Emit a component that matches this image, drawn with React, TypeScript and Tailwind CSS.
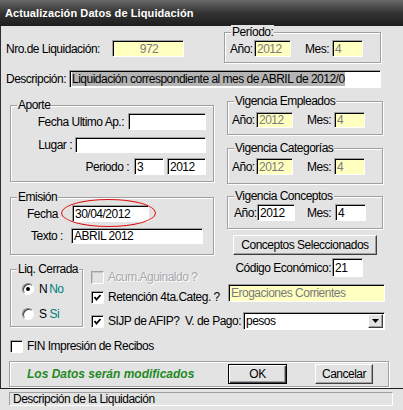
import type { ReactNode } from 'react';

const sunk = "border border-t-[#a0a0a0] border-l-[#a0a0a0] border-b-white border-r-white shadow-[inset_1px_1px_0_#000]";
const yellowBox = `${sunk} bg-[#ffffc0] text-[#7a7a7a] flex items-center pl-[2px] leading-[14px] overflow-hidden`;
const whiteBox = `${sunk} bg-white text-black flex items-center pl-[2px] leading-[14px] overflow-hidden`;
const raised = "bg-[#e3e3e3] border border-t-white border-l-white border-b-[#404040] border-r-[#404040] shadow-[inset_-1px_-1px_0_#a0a0a0] flex items-center justify-center";

function Group({ label, className = '', children }: { label: string; className?: string; children?: ReactNode }) {
  return (
    <div className={`relative border border-[#a0a0a0] shadow-[inset_1px_1px_0_#fff,1px_1px_0_#fff] ${className}`}>
      <span className="absolute left-[6px] -top-[8px] px-[1px] bg-[#e3e3e3] leading-[14px]">{label}</span>
      {children}
    </div>
  );
}

function Check({ checked = false, disabled = false }: { checked?: boolean; disabled?: boolean }) {
  return (
    <div className={`w-[13px] h-[13px] shrink-0 ${disabled ? 'border border-t-[#a0a0a0] border-l-[#a0a0a0] border-b-white border-r-white shadow-[inset_1px_1px_0_#c8c8c8] bg-[#e3e3e3]' : `${sunk} bg-white`}`}>
      {checked && (
        <svg viewBox="0 0 11 11" className="w-full h-full">
          <polyline points="2.5,5 4.5,7.5 8.5,3" fill="none" stroke="#000" strokeWidth="1.8" />
        </svg>
      )}
    </div>
  );
}

function Radio({ on = false }: { on?: boolean }) {
  return (
    <div className="w-[12px] h-[12px] rounded-full bg-white border border-t-[#808080] border-l-[#808080] border-b-white border-r-white shadow-[inset_1px_1px_0_#404040] flex items-center justify-center">
      {on && <div className="w-[4px] h-[4px] rounded-full bg-black" />}
    </div>
  );
}

function YearMonth({ year, month, white = false, h = 'h-[16px]' }: { year: string; month: string; white?: boolean; h?: string }) {
  const box = white ? whiteBox : yellowBox;
  return (
    <div className="flex items-center">
      <span className="w-[24px]">Año:</span>
      <div className={`${box} w-[37px] ${h}`}>{year}</div>
      <span className="ml-[14px] w-[27px]">Mes:</span>
      <div className={`${box} w-[31px] ${h}`}>{month}</div>
    </div>
  );
}

export default function App() {
  return (
    <div className="w-[403px] h-[410px] overflow-hidden bg-[#e3e3e3] text-black text-[12px] tracking-[-0.5px] leading-[14px] whitespace-nowrap font-['Liberation_Sans',sans-serif]">
      <div className="h-[26px] bg-gradient-to-b from-[#6a6a6a] via-[#333333] to-[#1e1e1e] flex items-center pl-[5px] text-white font-bold text-[11px] tracking-[0.1px]">
        Actualización Datos de Liquidación
      </div>

      <div className="h-[363px] border-l border-l-[#2e2e2e] border-b border-b-[#1e1e1e]">
        {/* fila 1 */}
        <div className="flex items-start">
          <div className="pl-[5px] pt-[14px] flex items-center">
            <span className="w-[106px]">Nro.de Liquidación:</span>
            <div className={`${yellowBox} w-[72px] h-[17px] justify-center pl-0`}>972</div>
          </div>
          <Group label="Período:" className="ml-[40px] mt-[6px] w-[157px] h-[31px]">
            <div className="pl-[5px] pt-[7px]">
              <YearMonth year="2012" month="4" h="h-[17px]" />
            </div>
          </Group>
        </div>

        <div className="mt-[7px] pl-[5px] flex items-center">
          <span className="w-[63px]">Descripción:</span>
          <div className={`${whiteBox} w-[312px] h-[18px]`}>
            <span className="bg-[#b4b4b4]">Liquidación correspondiente al mes de ABRIL de 2012/0</span>
          </div>
        </div>

        {/* columnas */}
        <div className="flex items-start pl-[9px]">
          <div className="mt-[17px] w-[204px] flex flex-col">
            <Group label="Aporte" className="h-[77px] flex flex-col items-end pr-[7px] pt-[7px]">
              <div className="flex items-center">
                <span className="mr-[4px]">Fecha Ultimo Ap.:</span>
                <div className={`${whiteBox} w-[78px] h-[17px]`} />
              </div>
              <div className="flex items-center mt-[7px]">
                <span className="mr-[3px]">Lugar :</span>
                <div className={`${whiteBox} w-[131px] h-[16px]`} />
              </div>
              <div className="flex items-center mt-[5px]">
                <span className="mr-[5px]">Periodo :</span>
                <div className={`${whiteBox} w-[30px] h-[17px]`}>3</div>
                <div className={`${whiteBox} w-[39px] h-[17px] ml-[3px]`}>2012</div>
              </div>
            </Group>

            <Group label="Emisión" className="mt-[15px] h-[58px] pt-[7px]">
              <div className="flex items-center">
                <span className="pl-[16px] w-[61px]">Fecha</span>
                <div className={`${whiteBox} w-[77px] h-[17px] relative overflow-visible`}>
                  30/04/2012
                  <span className="absolute -left-[12px] -top-[7px] w-[95px] h-[28px] rounded-[50%] border border-[#e01010]" />
                </div>
              </div>
              <div className="flex items-center mt-[6px]">
                <span className="pl-[20px] w-[60px]">Texto :</span>
                <div className={`${whiteBox} w-[132px] h-[16px]`}>ABRIL 2012</div>
              </div>
            </Group>
          </div>

          <div className="ml-[13px] mt-[13px] w-[156px] flex flex-col">
            <Group label="Vigencia Empleados" className="h-[34px] pt-[10px] pl-[4px]">
              <YearMonth year="2012" month="4" />
            </Group>
            <Group label="Vigencia Categorías" className="mt-[13px] h-[36px] pt-[9px] pl-[4px]">
              <YearMonth year="2012" month="4" h="h-[17px]" />
            </Group>
            <Group label="Vigencia Conceptos" className="mt-[12px] h-[33px] pt-[7px] pl-[6px]">
              <div className="flex items-center">
                <span className="w-[23px]">Año:</span>
                <div className={`${whiteBox} w-[38px] h-[17px]`}>2012</div>
                <span className="ml-[12px] w-[28px]">Mes:</span>
                <div className={`${whiteBox} w-[31px] h-[17px]`}>4</div>
              </div>
            </Group>
            <div className={`${raised} mt-[6px] ml-[6px] w-[144px] h-[20px]`}>Conceptos Seleccionados</div>
          </div>
        </div>

        {/* opciones */}
        <div className="mt-[3px] flex items-start pl-[9px]">
          <Group label="Liq. Cerrada" className="mt-[11px] w-[73px] h-[58px] pl-[11px] pt-[12px]">
            <div className="flex items-center">
              <Radio on />
              <span className="ml-[5px]">N</span>
              <span className="ml-[2px] text-[#008080]">No</span>
            </div>
            <div className="flex items-center mt-[11px]">
              <Radio />
              <span className="ml-[5px]">S</span>
              <span className="ml-[3px] text-[#008080]">Si</span>
            </div>
          </Group>

          <div className="ml-[8px] w-[294px] flex flex-col">
            <div className="h-[24px] flex items-start justify-between">
              <div className="mt-[12px] flex items-center">
                <Check disabled />
                <span className="ml-[4px] text-[#a8a8a8] [text-shadow:1px_1px_0_#fff]">Acum.Aguinaldo ?</span>
              </div>
              <div className="flex items-center mr-[22px]">
                <span className="mr-[1px]">Código Económico:</span>
                <div className={`${whiteBox} w-[31px] h-[19px]`}>21</div>
              </div>
            </div>
            <div className="mt-[2px] flex items-start justify-between">
              <div className="mt-[6px] flex items-center">
                <Check checked />
                <span className="ml-[4px]">Retención 4ta.Categ. ?</span>
              </div>
              <div className={`${yellowBox} w-[157px] h-[18px]`}>Erogaciones Corrientes</div>
            </div>
            <div className="mt-[8px] flex items-start justify-between">
              <div className="mt-[2px] flex items-center">
                <Check checked />
                <span className="ml-[4px]">SIJP de AFIP?</span>
              </div>
              <div className="flex items-center">
                <span className="mr-[2px]">V. de Pago:</span>
                <div className={`${whiteBox} w-[142px] h-[18px] justify-between pr-[1px]`}>
                  <span>pesos</span>
                  <div className={`${raised} w-[15px] h-[14px]`}>
                    <svg viewBox="0 0 7 4" className="w-[7px] h-[4px]">
                      <path d="M0 0 L7 0 L3.5 4 Z" fill="#000" />
                    </svg>
                  </div>
                </div>
              </div>
            </div>
          </div>
        </div>

        <div className="mt-[9px] pl-[9px] flex items-center">
          <Check />
          <span className="ml-[4px]">FIN Impresión de Recibos</span>
        </div>

        <div className="mt-[8px] ml-[8px] w-[380px] h-[26px] border border-[#a0a0a0] shadow-[inset_1px_1px_0_#fff,1px_1px_0_#fff] flex items-center pl-[17px]">
          <span className="text-[#1f8a1f] font-bold italic text-[12px] tracking-normal">Los Datos serán modificados</span>
          <div className="ml-auto mr-[15px] flex items-center gap-[28px]">
            <div className="w-[59px] h-[20px] border border-black bg-[#e3e3e3] shadow-[inset_1px_1px_0_#fff,inset_-1px_-1px_0_#404040,inset_-2px_-2px_0_#a0a0a0] flex items-center justify-center">OK</div>
            <div className={`${raised} w-[58px] h-[20px]`}>Cancelar</div>
          </div>
        </div>
      </div>

      <div className="mt-[3px] ml-[9px] w-[384px] h-[14px] border border-t-[#a0a0a0] border-l-[#a0a0a0] border-b-white border-r-white pl-[3px] leading-[12px]">
        Descripción de la Liquidación
      </div>
    </div>
  );
}
